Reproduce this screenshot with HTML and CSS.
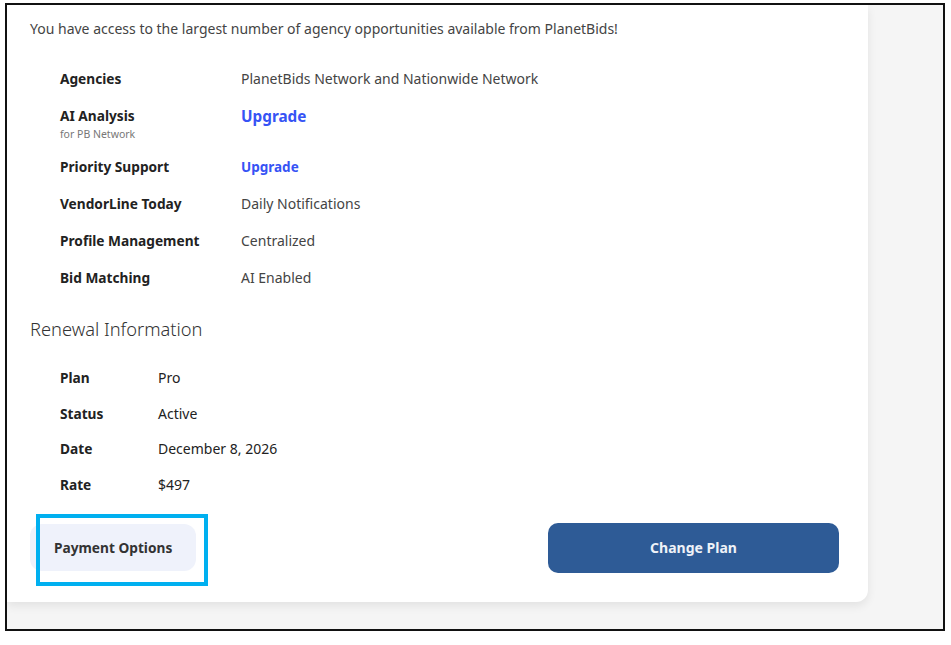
FILE: index.html
```html
<!DOCTYPE html>
<html lang="en">
<head>
<meta charset="utf-8">
<title>Subscription</title>
<link rel="stylesheet" href="styles.css">
</head>
<body>
<div class="frame">
  <div class="card">
    <p class="intro">You have access to the largest number of agency opportunities available from PlanetBids!</p>
    <div class="features">
      <div class="row">
        <div class="label">Agencies</div>
        <div class="value">PlanetBids Network and Nationwide Network</div>
      </div>
      <div class="row">
        <div class="label">AI Analysis<span class="sub">for PB Network</span></div>
        <div class="value"><a class="upgrade big" href="#">Upgrade</a></div>
      </div>
      <div class="row">
        <div class="label">Priority Support</div>
        <div class="value"><a class="upgrade" href="#">Upgrade</a></div>
      </div>
      <div class="row">
        <div class="label">VendorLine Today</div>
        <div class="value">Daily Notifications</div>
      </div>
      <div class="row">
        <div class="label">Profile Management</div>
        <div class="value">Centralized</div>
      </div>
      <div class="row">
        <div class="label">Bid Matching</div>
        <div class="value">AI Enabled</div>
      </div>
    </div>
    <h2 class="heading">Renewal Information</h2>
    <div class="renewal">
      <div class="row">
        <div class="label">Plan</div>
        <div class="value dark">Pro</div>
      </div>
      <div class="row">
        <div class="label">Status</div>
        <div class="value dark">Active</div>
      </div>
      <div class="row">
        <div class="label">Date</div>
        <div class="value dark">December 8, 2026</div>
      </div>
      <div class="row">
        <div class="label">Rate</div>
        <div class="value dark">$497</div>
      </div>
    </div>
    <div class="actions">
      <div class="pay-wrap">
        <button class="btn-pay" type="button">Payment Options</button>
        <span class="highlight"></span>
      </div>
      <button class="btn-change" type="button">Change Plan</button>
    </div>
  </div>
</div>
</body>
</html>
```
FILE: styles.css
```css
* { box-sizing: border-box; }
html, body { margin: 0; padding: 0; background: #ffffff; }
body {
  font-family: "Noto Sans", "Open Sans", sans-serif;
  color: #444;
}
.frame {
  margin: 3px 0 0 5px;
  width: 940px;
  height: 628px;
  border: 2px solid #111;
  background: #f5f5f5;
  overflow: hidden;
}
.card {
  width: 861px;
  background: #fff;
  border-radius: 0 0 12px 0;
  box-shadow: 0 4px 10px rgba(0, 0, 0, 0.08);
  padding: 13px 29px 29px 23px;
}
.intro {
  margin: 0 0 28px 0;
  font-size: 14px;
  line-height: 22px;
  color: #444;
}
.features, .renewal {
  display: flex;
  flex-direction: column;
  padding-left: 30px;
}
.features { gap: 15px; }
.renewal { gap: 13.5px; }
.row {
  display: flex;
  align-items: flex-start;
}
.features .label { width: 181px; }
.renewal .label { width: 98px; }
.label {
  font-weight: 700;
  font-size: 13.7px;
  line-height: 22px;
  color: #222;
  display: flex;
  flex-direction: column;
}
.sub {
  font-weight: 400;
  font-size: 10.5px;
  line-height: 14px;
  color: #777;
}
.value {
  font-size: 14px;
  line-height: 22px;
  color: #444;
}
.value.dark { color: #222; }
.upgrade {
  color: #3653f5;
  font-weight: 700;
  text-decoration: none;
  font-size: 13.5px;
}
.upgrade.big { font-size: 15.3px; }
.heading {
  margin: 27px 0 25px 0;
  font-size: 18.3px;
  font-weight: 300;
  line-height: 26px;
  color: #333;
}
.actions {
  margin-top: 27px;
  display: flex;
  justify-content: space-between;
  align-items: center;
}
.pay-wrap {
  position: relative;
}
.btn-pay {
  font-family: inherit;
  width: 166px;
  height: 47px;
  border: none;
  border-radius: 12px;
  background: #eff2fb;
  color: #333;
  font-weight: 700;
  font-size: 13.7px;
  text-align: left;
  padding: 0 0 0 24px;
}
.highlight {
  position: absolute;
  left: 6px;
  top: -10px;
  width: 172px;
  height: 72px;
  border: 4px solid #00b0f0;
}
.btn-change {
  font-family: inherit;
  width: 291px;
  height: 50px;
  border: none;
  border-radius: 10px;
  background: #2e5b96;
  color: #eef2f8;
  font-weight: 700;
  font-size: 14px;
}
```
